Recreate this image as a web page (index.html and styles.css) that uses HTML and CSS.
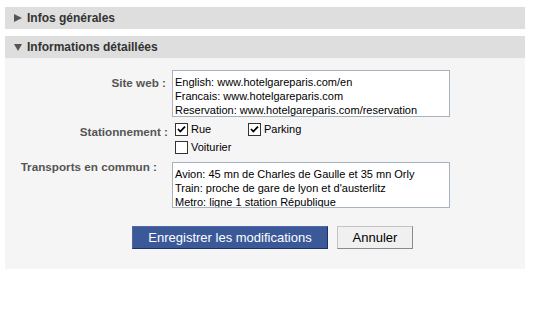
FILE: index.html
```html
<!DOCTYPE html>
<html lang="fr">
<head>
<meta charset="utf-8">
<title>Infos</title>
<link rel="stylesheet" href="styles.css">
</head>
<body>
<div class="panel">
  <div class="section-head">
    <svg class="tri" width="8" height="8" viewBox="0 0 8 8"><path d="M0 0 L8 4 L0 8 Z" fill="#555"/></svg>
    <span>Infos générales</span>
  </div>
  <div class="section-head open">
    <svg class="tri" width="8" height="8" viewBox="0 0 8 8"><path d="M0 0 L8 0 L4 7 Z" fill="#555"/></svg>
    <span>Informations détaillées</span>
  </div>
  <div class="section-body">
    <div class="row row-site">
      <div class="label label-site">Site web :</div>
      <div class="field textbox tb1">English: www.hotelgareparis.com/en<br>Francais: www.hotelgareparis.com<br>Reservation: www.hotelgareparis.com/reservation</div>
    </div>
    <div class="row row-park">
      <div class="label label-park">Stationnement :</div>
      <div class="checks">
        <div class="check-line">
          <label class="check c-rue"><span class="box"><svg width="11" height="11" viewBox="0 0 11 11"><path d="M2 5 L4.3 7.5 L9 2.6" fill="none" stroke="#000" stroke-width="1.8"/></svg></span>Rue</label>
          <label class="check"><span class="box"><svg width="11" height="11" viewBox="0 0 11 11"><path d="M2 5 L4.3 7.5 L9 2.6" fill="none" stroke="#000" stroke-width="1.8"/></svg></span>Parking</label>
        </div>
        <div class="check-line">
          <label class="check"><span class="box"></span>Voiturier</label>
        </div>
      </div>
    </div>
    <div class="row row-trans">
      <div class="label label-trans">Transports en commun :</div>
      <div class="field textbox tb2">Avion: 45 mn de Charles de Gaulle et 35 mn Orly<br>Train: proche de gare de lyon et d'austerlitz<br>Metro: ligne 1 station République</div>
    </div>
    <div class="actions">
      <button class="btn btn-primary" type="button">Enregistrer les modifications</button>
      <button class="btn btn-cancel" type="button">Annuler</button>
    </div>
  </div>
</div>
</body>
</html>
```
FILE: styles.css
```css
html, body {
  margin: 0;
  padding: 0;
  background: #ffffff;
}
body {
  font-family: "Liberation Sans", Arial, sans-serif;
  font-size: 11px;
  color: #000;
}
.panel {
  width: 520px;
  margin: 7px 0 0 5px;
}
.section-head {
  height: 22px;
  background: #dedede;
  display: flex;
  align-items: center;
  font-weight: bold;
  font-size: 12px;
  color: #333;
  margin-bottom: 7px;
}
.section-head.open {
  margin-bottom: 0;
}
.tri {
  margin-left: 9px;
  margin-right: 5px;
  display: block;
}
.section-head.open .tri {
  margin-top: 1px;
}
.section-body {
  background: #f5f5f5;
  padding: 12px 0 20px 0;
}
.row {
  display: flex;
  align-items: flex-start;
}
.label {
  width: 164px;
  box-sizing: border-box;
  text-align: right;
  font-weight: bold;
  font-size: 11.7px;
  line-height: 14px;
  color: #555;
}
.label-site { padding-top: 6px; padding-right: 3px; }
.label-park { padding-top: 3px; padding-right: 1px; }
.label-trans { margin-top: -2px; padding-right: 12px; }
.field {
  margin-left: 3px;
}
.textbox {
  box-sizing: border-box;
  width: 278px;
  background: #fff;
  border: 1px solid #a7b2bf;
  padding: 4px 2px 0 2px;
  line-height: 14px;
  font-size: 11px;
  white-space: nowrap;
  overflow: hidden;
}
.tb1 { height: 47px; }
.tb2 { height: 46px; }
.row-park { margin-top: 5px; }
.row-trans { margin-top: 4px; }
.checks {
  margin-left: 6px;
}
.check-line {
  height: 18px;
  display: flex;
  align-items: flex-start;
}
.check {
  display: flex;
  align-items: center;
  gap: 3px;
  height: 13px;
  margin-top: 1px;
  line-height: 13px;
}
.c-rue {
  width: 73px;
}
.box {
  box-sizing: border-box;
  width: 13px;
  height: 13px;
  border: 1px solid #333;
  background: #fff;
  display: block;
}
.box svg {
  display: block;
}
.actions {
  display: flex;
  gap: 9px;
  margin: 18px 0 0 127px;
}
.btn {
  box-sizing: border-box;
  height: 23px;
  font-family: "Liberation Sans", Arial, sans-serif;
  font-size: 13px;
  padding: 0;
  margin: 0;
  border-style: solid;
  border-width: 1px;
}
.btn-primary {
  width: 196px;
  background: #3b5998;
  color: #fff;
  border-color: #4d68a3 #1d3162 #1d3162 #4d68a3;
}
.btn-cancel {
  width: 76px;
  background: #f0f0f0;
  color: #000;
  border-color: #c4c4c4 #8a8a8a #8a8a8a #c4c4c4;
}
```
